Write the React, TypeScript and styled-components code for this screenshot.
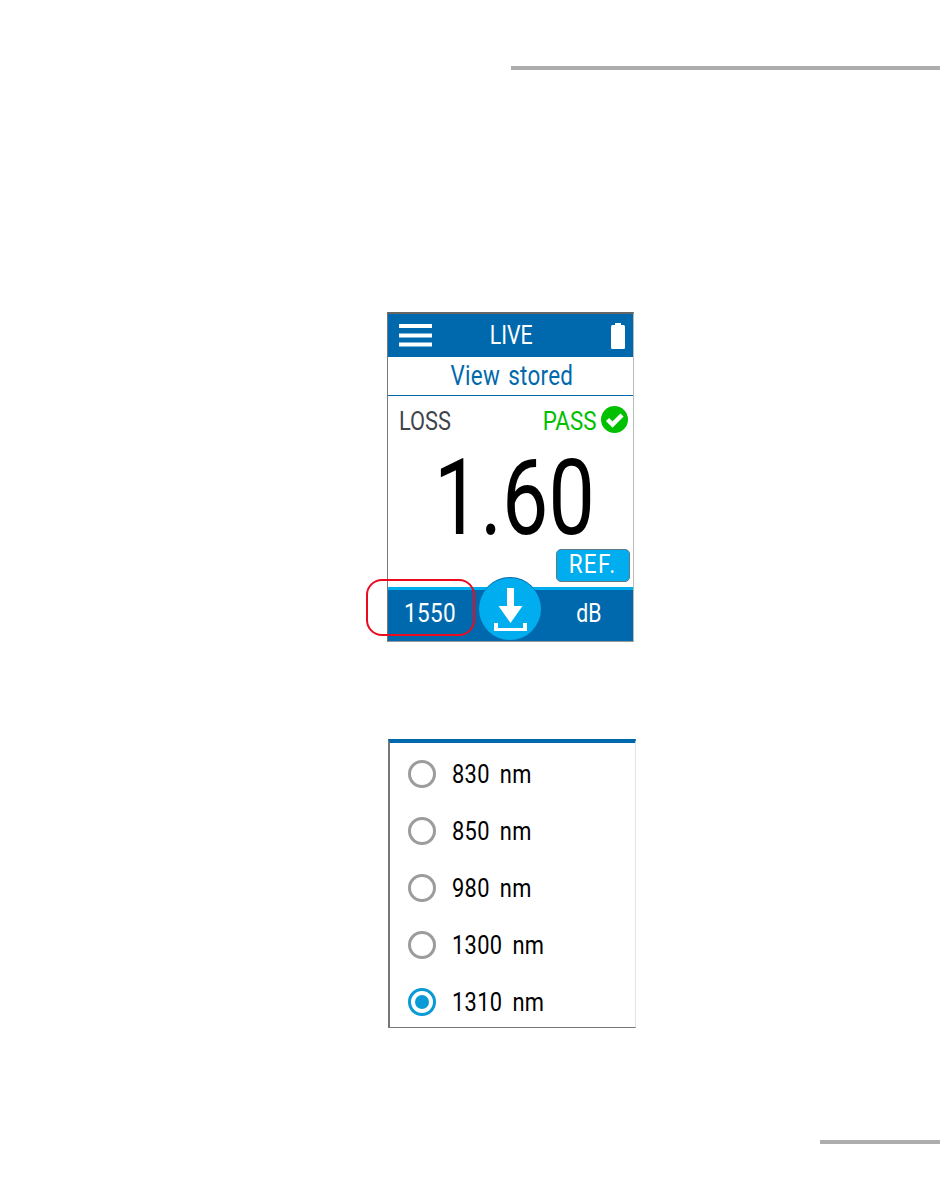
import React from "react";
import styled, { createGlobalStyle } from "styled-components";

const Global = createGlobalStyle`
  html, body { margin: 0; padding: 0; background: #fff; }
  body { font-family: Roboto, "Liberation Sans", sans-serif; }
`;

const Page = styled.div`
  width: 950px;
  height: 1181px;
  padding-top: 66px;
  box-sizing: border-box;
  overflow: hidden;
`;

const Rule = styled.div<{ $left: number; $top: number; $width: number }>`
  margin-left: ${(p) => p.$left}px;
  margin-top: ${(p) => p.$top}px;
  width: ${(p) => p.$width}px;
  height: 4px;
  background: #adadad;
`;

const Device = styled.div`
  position: relative;
  margin: 242px 0 0 387px;
  width: 247px;
  height: 330px;
  box-sizing: border-box;
  border-top: 2px solid #666;
  border-left: 1px solid #777;
  border-right: 1px solid #bbb;
  border-bottom: 1px solid #999;
  display: flex;
  flex-direction: column;
`;

const Squeeze = styled.span<{ $x: number; $origin?: string; $track?: number; $word?: number }>`
  display: inline-block;
  white-space: nowrap;
  letter-spacing: ${(p) => p.$track ?? 0}px;
  word-spacing: ${(p) => p.$word ?? 0}px;
  transform: scaleX(${(p) => p.$x});
  transform-origin: ${(p) => p.$origin || "center"};
`;

const LiveTitle = styled(Squeeze)`
  margin-right: 2px;
`;

const Header = styled.header`
  height: 43px;
  flex: none;
  background: #0069ad;
  color: #fff;
  display: grid;
  grid-template-columns: 1fr auto 1fr;
  align-items: center;
  padding: 0 8px 0 11px;
  font-size: 26px;
  line-height: 43px;
`;

const HeaderRight = styled.div`
  display: flex;
  justify-content: flex-end;
`;

const Stored = styled.div`
  height: 37px;
  flex: none;
  border-bottom: 1px solid #0069ad;
  color: #0069ad;
  font-size: 27px;
  line-height: 37px;
  text-align: center;
  padding: 1px 0 0 2px;
`;

const Main = styled.div`
  flex: 1;
  display: flex;
  flex-direction: column;
  min-height: 0;
`;

const StatusRow = styled.div`
  display: flex;
  justify-content: space-between;
  align-items: center;
  padding: 9px 5px 0 12px;
  height: 29px;
  font-size: 26px;
`;

const Loss = styled.div`
  color: #3f444a;
  padding-top: 3px;
  margin-left: -1px;
`;

const Pass = styled.div`
  color: #00c000;
  display: flex;
  align-items: center;
  gap: 5px;
  & > span {
    padding-top: 3px;
  }
`;

const Value = styled.div`
  height: 100px;
  margin-top: 15px;
  font-size: 105px;
  line-height: 100px;
  color: #000;
  text-align: center;
  padding-left: 8px;
`;

const RefRow = styled.div`
  display: flex;
  justify-content: flex-end;
  padding-right: 3px;
`;

const RefButton = styled.div`
  width: 74px;
  height: 33px;
  box-sizing: border-box;
  background: #00aeef;
  border: 1px solid #5b7b8c;
  border-radius: 5px;
  color: #fff;
  font-size: 25px;
  line-height: 30px;
  text-align: center;
`;

const Footer = styled.footer`
  position: relative;
  height: 54px;
  flex: none;
  box-sizing: border-box;
  background: #0069ad;
  border-top: 3px solid #00aeef;
  color: #fff;
  display: grid;
  grid-template-columns: 1fr 1fr;
  align-items: center;
  font-size: 25px;
  line-height: 44px;
  padding-bottom: 4px;
`;

const FootLeft = styled.div`
  padding-left: 16px;
`;

const FootRight = styled.div`
  text-align: right;
  padding-right: 29px;
`;

const SaveButton = styled.div`
  position: absolute;
  left: 91px;
  top: -12px;
  width: 62px;
  height: 62px;
  border-radius: 50%;
  background: #00aeef;
  box-shadow: 0 -1px 0 #0069ad;
  display: flex;
  align-items: center;
  justify-content: center;
`;

const Callout = styled.div`
  position: absolute;
  left: -22px;
  top: 265px;
  width: 109px;
  height: 57px;
  box-sizing: border-box;
  border: 2.5px solid #ec0a1e;
  border-radius: 16px;
`;

const List = styled.div`
  margin: 97px 0 0 388px;
  width: 248px;
  height: 289px;
  box-sizing: border-box;
  border-top: 4px solid #0069ad;
  border-left: 2px solid #777;
  border-right: 1px solid #e4e4e4;
  border-bottom: 1px solid #777;
  padding-top: 2px;
`;

const Option = styled.div`
  height: 57px;
  display: flex;
  align-items: center;
  padding-left: 18px;
  font-size: 26px;
  color: #000;
`;

const Radio = styled.span<{ $on?: boolean }>`
  width: 28px;
  height: 28px;
  box-sizing: border-box;
  flex: none;
  border-radius: 50%;
  border: 3px solid ${(p) => (p.$on ? "#0a9ad6" : "#9c9c9c")};
  display: flex;
  align-items: center;
  justify-content: center;
  margin-right: 16px;
  &::after {
    content: "";
    display: ${(p) => (p.$on ? "block" : "none")};
    width: 14px;
    height: 14px;
    border-radius: 50%;
    background: #0a9ad6;
  }
`;

const MenuIcon = () => (
  <svg width="34" height="24" viewBox="0 0 34 24" fill="#fff" style={{ display: "block" }}>
    <rect x="0" y="0" width="33" height="4" />
    <rect x="0" y="9.5" width="33" height="4" />
    <rect x="0" y="18.5" width="33" height="4" />
  </svg>
);

const BatteryIcon = () => (
  <svg width="15" height="26" viewBox="0 0 15 26" fill="#fff" style={{ display: "block" }}>
    <rect x="5" y="0" width="6" height="3" />
    <rect x="1" y="2" width="14" height="24" rx="1.5" />
  </svg>
);

const CheckIcon = () => (
  <svg width="27" height="27" viewBox="0 0 27 27" style={{ display: "block" }}>
    <circle cx="13.5" cy="13.5" r="13.5" fill="#00c000" />
    <path d="M6.5 13.5 L11.5 18.5 L21 9" fill="none" stroke="#fff" strokeWidth="4.5" />
  </svg>
);

const DownloadIcon = () => (
  <svg width="33" height="43" viewBox="0 0 33 43" fill="#fff" style={{ display: "block" }}>
    <path d="M13 0 H20 V18 H28.5 L16.5 35 L4.5 18 H13 Z" />
    <path d="M0 35 H4 V40 H29 V35 H33 V43 H0 Z" />
  </svg>
);

const options: { label: string; on?: boolean }[] = [
  { label: "830 nm" },
  { label: "850 nm" },
  { label: "980 nm" },
  { label: "1300 nm" },
  { label: "1310 nm", on: true },
];

export default function App() {
  return (
    <Page>
      <Global />
      <Rule $left={511} $top={0} $width={429} />
      <Device>
        <Header>
          <MenuIcon />
          <LiveTitle $x={0.82}>LIVE</LiveTitle>
          <HeaderRight>
            <BatteryIcon />
          </HeaderRight>
        </Header>
        <Stored>
          <Squeeze $x={0.83} $track={0.3} $word={3}>View stored</Squeeze>
        </Stored>
        <Main>
          <StatusRow>
            <Loss>
              <Squeeze $x={0.84} $origin="left">LOSS</Squeeze>
            </Loss>
            <Pass>
              <Squeeze $x={0.86} $origin="right">PASS</Squeeze>
              <CheckIcon />
            </Pass>
          </StatusRow>
          <Value>
            <Squeeze $x={0.785}>1.60</Squeeze>
          </Value>
          <RefRow>
            <RefButton>
              <Squeeze $x={0.9} $track={1.5}>REF.</Squeeze>
            </RefButton>
          </RefRow>
        </Main>
        <Footer>
          <FootLeft>
            <Squeeze $x={0.9} $origin="left" $track={0.4}>1550</Squeeze>
          </FootLeft>
          <FootRight>
            <Squeeze $x={0.85}>dB</Squeeze>
          </FootRight>
          <SaveButton>
            <DownloadIcon />
          </SaveButton>
        </Footer>
        <Callout />
      </Device>
      <List>
        {options.map((o) => (
          <Option key={o.label}>
            <Radio $on={o.on} />
            <Squeeze $x={0.84} $origin="left" $track={0.4} $word={5}>{o.label}</Squeeze>
          </Option>
        ))}
      </List>
      <Rule $left={820} $top={112} $width={120} />
    </Page>
  );
}
